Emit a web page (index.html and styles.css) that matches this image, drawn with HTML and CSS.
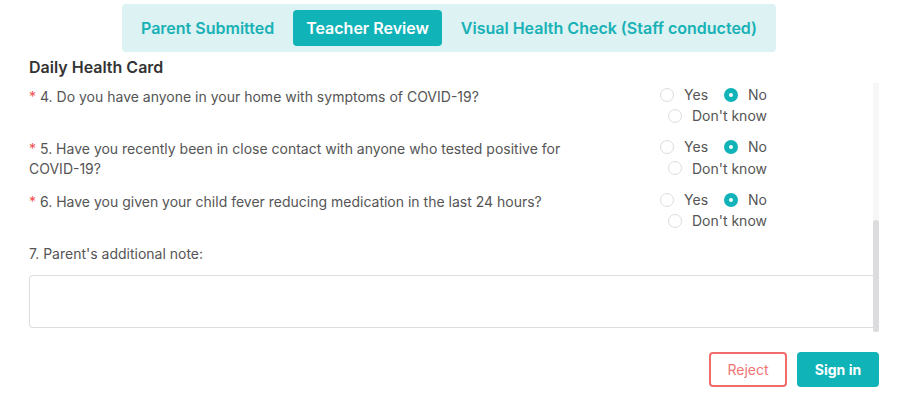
FILE: index.html
```html
<!DOCTYPE html>
<html lang="en">
<head>
<meta charset="utf-8">
<title>Daily Health Card</title>
<link rel="stylesheet" href="styles.css">
</head>
<body>
<div class="tabs-wrap">
  <div class="tabs">
    <div class="tab">Parent Submitted</div>
    <div class="tab active">Teacher Review</div>
    <div class="tab">Visual Health Check (Staff conducted)</div>
  </div>
</div>
<main class="main">
  <h2 class="title">Daily Health Card</h2>
  <div class="panel">
    <div class="content">
      <div class="q">
        <div class="q-text"><span class="req">*</span>4. Do you have anyone in your home with symptoms of COVID-19?</div>
        <div class="opts">
          <label class="opt"><span class="radio"></span>Yes</label>
          <label class="opt"><span class="radio on"></span>No</label>
          <label class="opt"><span class="radio"></span>Don't know</label>
        </div>
      </div>
      <div class="q">
        <div class="q-text"><span class="req">*</span>5. Have you recently been in close contact with anyone who tested positive for COVID-19?</div>
        <div class="opts">
          <label class="opt"><span class="radio"></span>Yes</label>
          <label class="opt"><span class="radio on"></span>No</label>
          <label class="opt"><span class="radio"></span>Don't know</label>
        </div>
      </div>
      <div class="q">
        <div class="q-text"><span class="req">*</span>6. Have you given your child fever reducing medication in the last 24 hours?</div>
        <div class="opts">
          <label class="opt"><span class="radio"></span>Yes</label>
          <label class="opt"><span class="radio on"></span>No</label>
          <label class="opt"><span class="radio"></span>Don't know</label>
        </div>
      </div>
      <div class="note-label">7. Parent's additional note:</div>
      <div class="note"></div>
    </div>
    <div class="scrollbar"><div class="thumb"></div></div>
  </div>
  <div class="actions">
    <button class="btn reject">Reject</button>
    <button class="btn sign">Sign in</button>
  </div>
</main>
</body>
</html>
```

FILE: styles.css
```css
* { box-sizing: border-box; }
body {
  margin: 0;
  font-family: Inter, "Noto Sans", "Liberation Sans", sans-serif;
  background: #fff;
  color: #555;
}
.tabs-wrap {
  display: flex;
  justify-content: center;
  padding-top: 4px;
  padding-left: 1px;
}
.tabs {
  display: flex;
  gap: 6px;
  background: #dcf2f3;
  border-radius: 4px;
  padding: 6px;
  height: 48px;
}
.tab {
  display: flex;
  align-items: center;
  padding: 0 13px;
  height: 36px;
  font-size: 16px;
  font-weight: 600;
  color: #17b1b6;
  border-radius: 4px;
}
.tab.active {
  background: #10b3b8;
  color: #fff;
}
.main {
  padding: 0 18px 0 29px;
}
.title {
  margin: 4px 0 5px;
  font-size: 16px;
  line-height: 22px;
  font-weight: 600;
  color: #333;
}
.panel {
  display: flex;
  height: 249px;
}
.content {
  flex: 1;
  padding: 1px 0 5px;
}
.scrollbar {
  width: 6px;
  background: #f7f7f7;
  display: flex;
  flex-direction: column;
  justify-content: flex-end;
}
.thumb {
  height: 112px;
  background: #dcdcde;
  border-radius: 3px 3px 2px 2px;
}
.q {
  display: flex;
  margin-bottom: 10px;
}
.q-text {
  width: 545px;
  margin-right: 71px;
  padding-top: 3px;
  font-size: 14px;
  line-height: 20px;
  color: #555;
}
.req {
  color: #f5504f;
  margin-right: 4px;
}
.opts {
  width: 122px;
  display: flex;
  flex-wrap: wrap;
  justify-content: flex-end;
  column-gap: 16px;
}
.opt {
  display: flex;
  align-items: center;
  gap: 10px;
  font-size: 14px;
  line-height: 21px;
  color: #555;
}
.radio {
  width: 14px;
  height: 14px;
  border-radius: 50%;
  border: 1px solid #dadce2;
  background: #fff;
}
.radio.on {
  border: 5px solid #10b3b8;
}
.note-label {
  margin-top: 13px;
  font-size: 14px;
  line-height: 20px;
  color: #555;
}
.note {
  margin-top: 11px;
  height: 53px;
  border: 1px solid #dcdde3;
  border-right: none;
  border-radius: 4px 0 0 4px;
}
.actions {
  display: flex;
  justify-content: flex-end;
  gap: 10px;
  margin-top: 20px;
}
.btn {
  height: 35px;
  border-radius: 4px;
  font-family: Inter, "Noto Sans", "Liberation Sans", sans-serif;
  font-size: 14px;
  border: 2px solid transparent;
  cursor: pointer;
}
.reject {
  width: 78px;
  background: #fff;
  border-color: #f06b6b;
  color: #f07575;
}
.sign {
  width: 82px;
  background: #10b3b8;
  color: #fff;
  font-weight: 700;
}
```
